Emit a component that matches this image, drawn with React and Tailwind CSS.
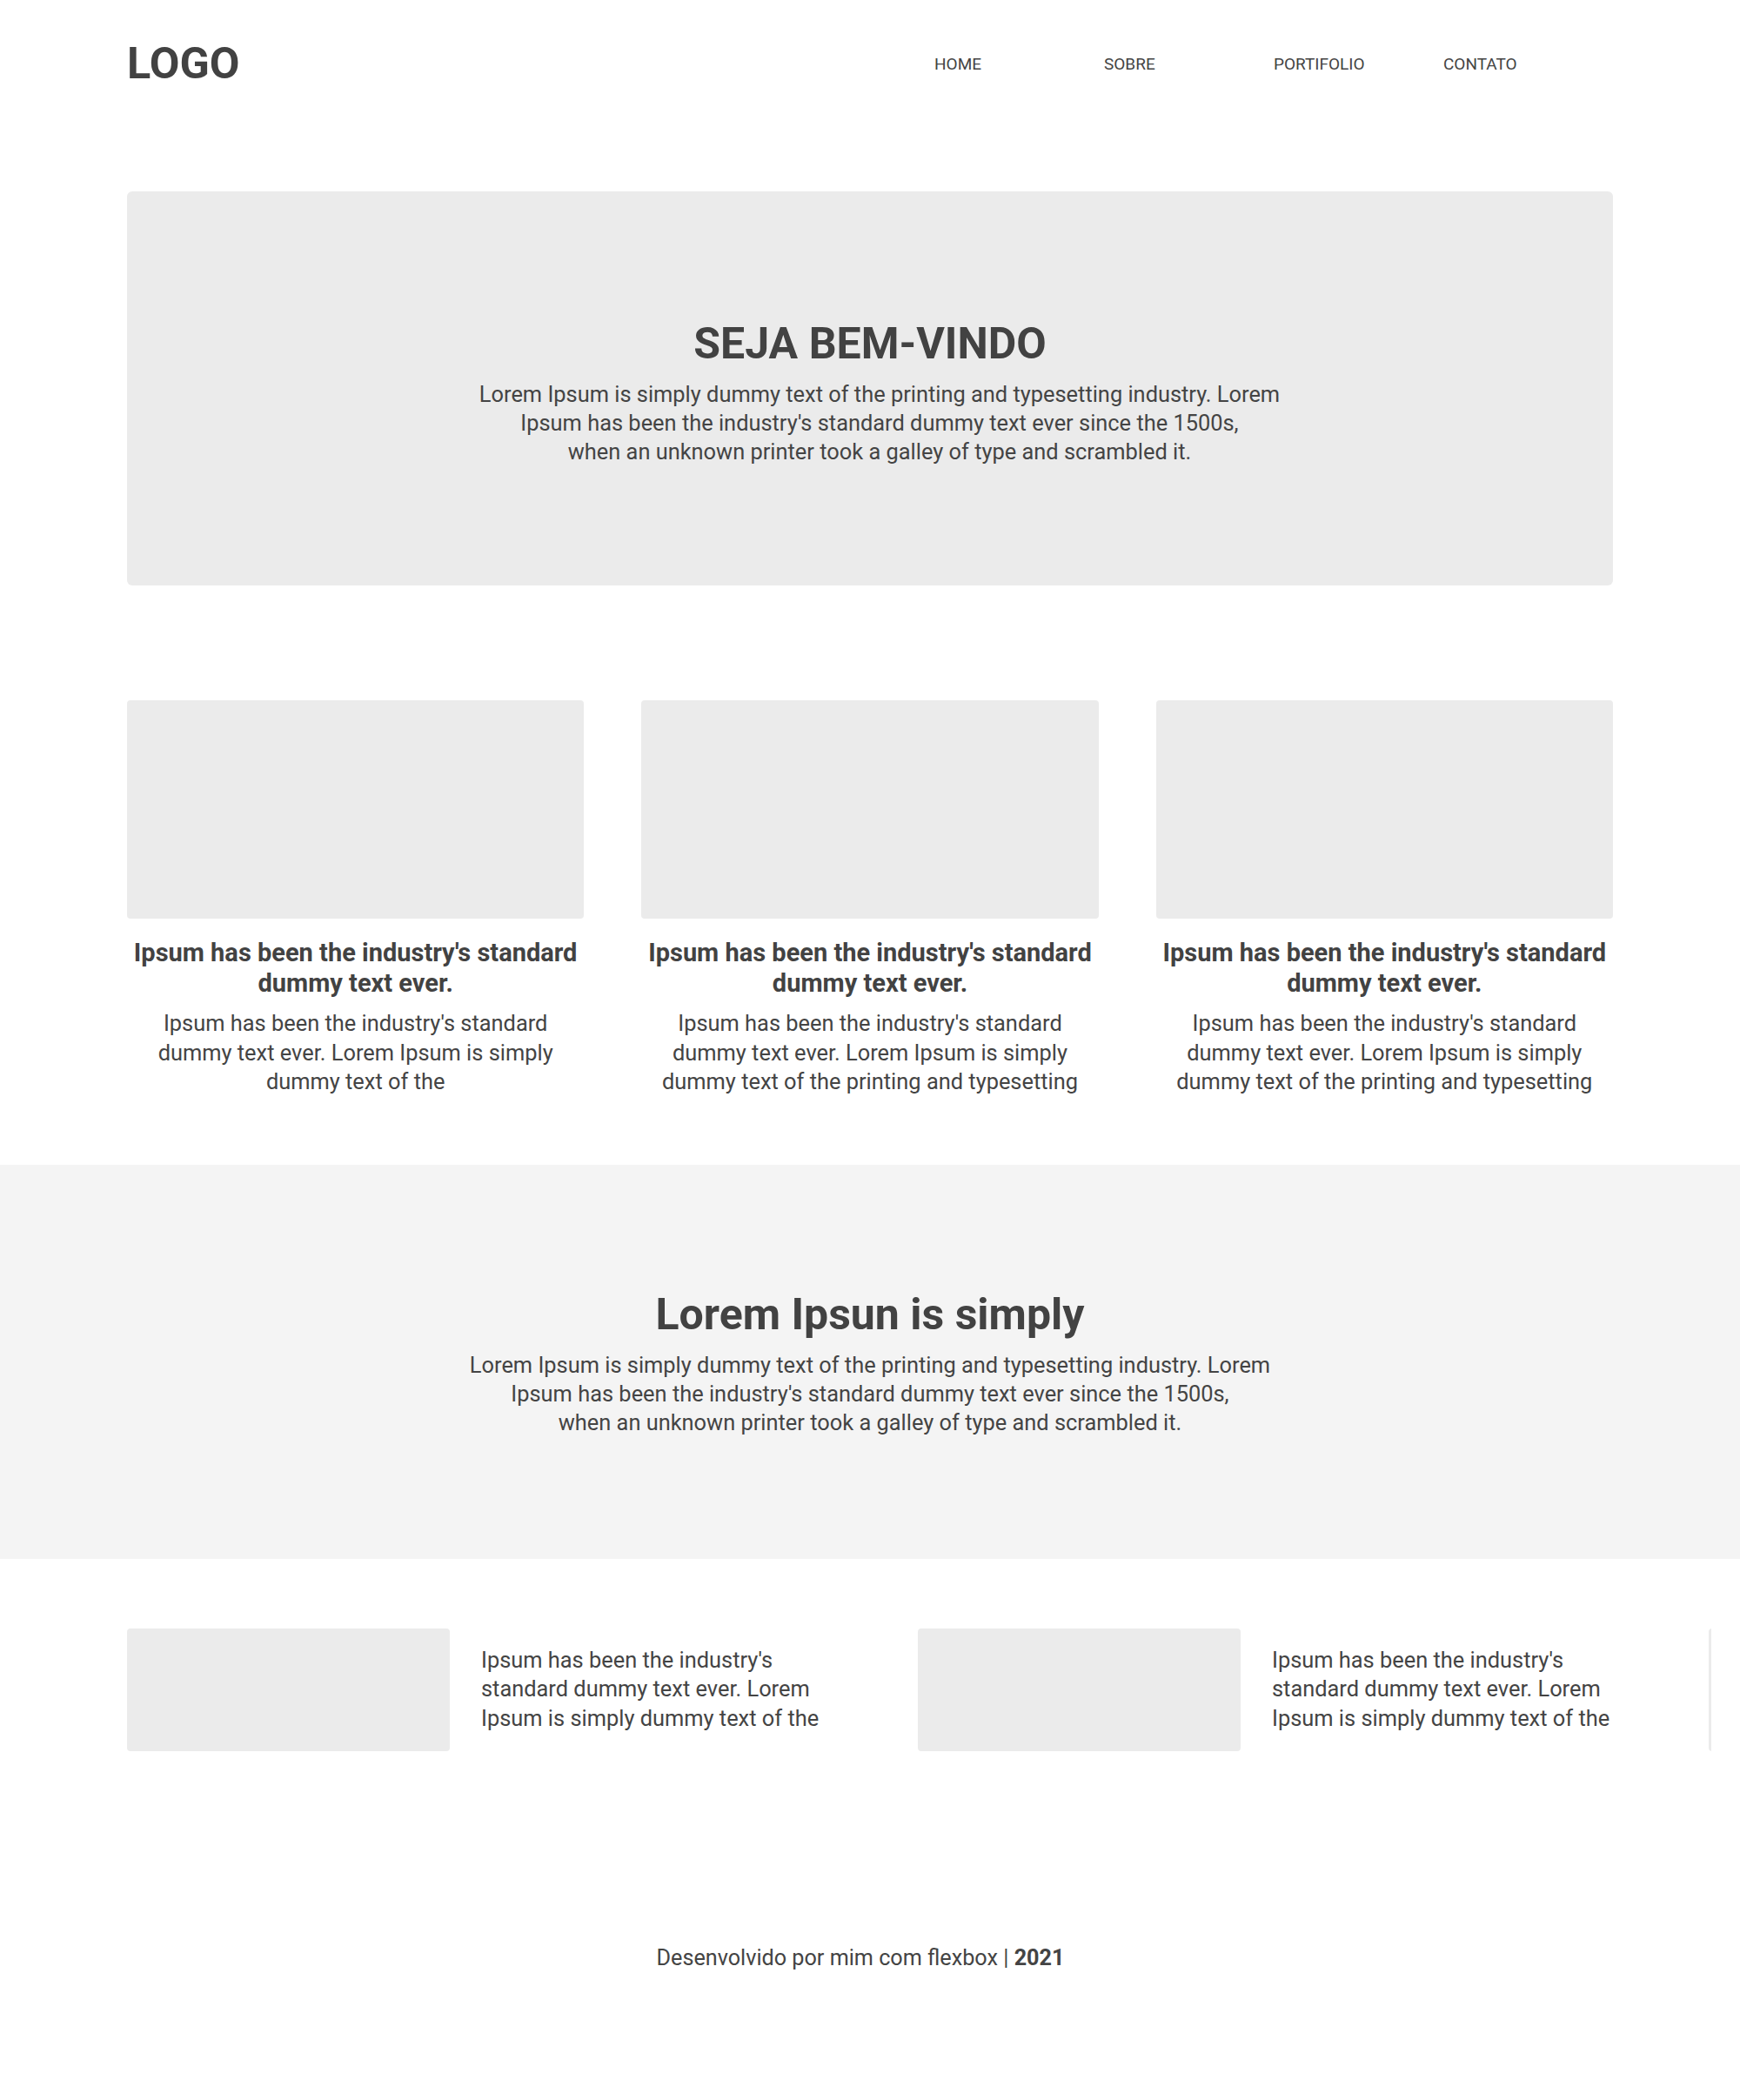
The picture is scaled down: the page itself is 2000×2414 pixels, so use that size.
const cards = [
  "Ipsum has been the industry's standard dummy text ever. Lorem Ipsum is simply dummy text of the",
  "Ipsum has been the industry's standard dummy text ever. Lorem Ipsum is simply dummy text of the printing and typesetting",
  "Ipsum has been the industry's standard dummy text ever. Lorem Ipsum is simply dummy text of the printing and typesetting",
]

const navLinks = ["HOME", "SOBRE", "PORTIFOLIO", "CONTATO"]

const Banner = ({ title, className, textClass }) => (
  <section className={`flex h-[453px] flex-col items-center ${className}`}>
    <h1 className="text-[50px] font-bold leading-[60px] text-[#424242]">{title}</h1>
    <p className={`mt-[12px] text-center text-[25.4px] leading-[33px] text-[#444] ${textClass}`}>
      Lorem Ipsum is simply dummy text of the printing and typesetting industry. Lorem
      <br />
      Ipsum has been the industry's standard dummy text ever since the 1500s,
      <br />
      when an unknown printer took a galley of type and scrambled it.
    </p>
  </section>
)

const Feature = () => (
  <div className="flex shrink-0 items-center gap-[36px]">
    <div className="h-[141px] w-[371px] shrink-0 rounded-[4px] bg-[#ebebeb]" />
    <p className="w-[400px] text-[25.4px] leading-[33.5px]">
      Ipsum has been the industry's standard dummy text ever. Lorem Ipsum is simply dummy text of the
    </p>
  </div>
)

export default function App() {
  return (
    <div className="w-full bg-white font-['Roboto',sans-serif] text-[#444]">
      <div className="mx-auto w-[1708px]">
        <header className="flex h-[141px] items-center justify-between">
          <a href="#" className="pt-[4px] text-[50.4px] font-bold leading-[50px] text-[#424242]">
            LOGO
          </a>
          <nav className="flex pt-[6px]">
            {navLinks.map((link) => (
              <a key={link} href="#" className="w-[195px] text-[19px] leading-[20px] text-[#444]">
                {link}
              </a>
            ))}
          </nav>
        </header>

        <Banner
          title="SEJA BEM-VINDO"
          className="mt-[79px] rounded-[6px] bg-[#ebebeb] pt-[145px]"
          textClass="ml-[22px]"
        />

        <div className="mt-[132px] grid grid-cols-3 gap-[66px]">
          {cards.map((text, i) => (
            <div key={i} className="flex flex-col items-center text-center">
              <div className="h-[251px] w-full rounded-[4px] bg-[#ebebeb]" />
              <h2 className="mt-[22px] text-[29px] font-bold leading-[35px] text-[#424242]">
                Ipsum has been the industry's standard dummy text ever.
              </h2>
              <p className="mt-[12px] px-[18px] text-[25.4px] leading-[33.5px]">{text}</p>
            </div>
          ))}
        </div>
      </div>

      <Banner title="Lorem Ipsun is simply" className="mt-[78px] w-full bg-[#f4f4f4] pt-[142px]" textClass="" />

      <div className="ml-[146px] mt-[80px] flex w-[1821px] gap-[102px] overflow-hidden">
        <Feature />
        <Feature />
        <div className="h-[141px] w-[371px] shrink-0 rounded-[4px] bg-[#ebebeb]" />
      </div>

      <footer className="pb-[148px] pr-[22px] pt-[221px] text-center text-[25.2px] leading-[33px]">
        Desenvolvido por mim com flexbox | <strong className="font-bold">2021</strong>
      </footer>
    </div>
  )
}
